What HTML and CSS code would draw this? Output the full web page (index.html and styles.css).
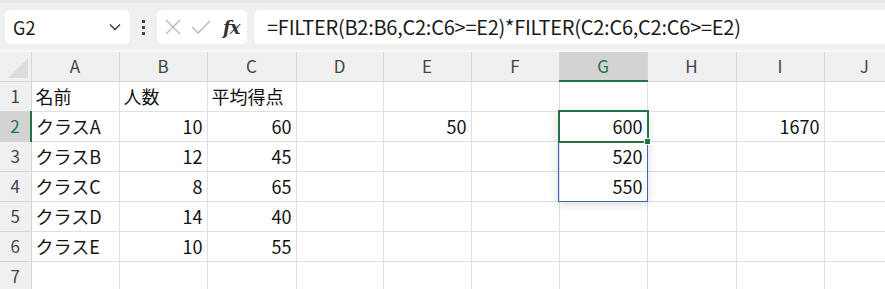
FILE: index.html
```html
<!DOCTYPE html>
<html lang="ja">
<head>
    <meta charset="UTF-8">
    <title>FILTER</title>
    <link rel="stylesheet" href="styles.css">
</head>
<body>
    <div class="toolbar">
        <div class="name_box">
            <span>G2</span>
            <svg width="12" height="8" viewBox="0 0 12 8"><path d="M1 1.5 L6 6.5 L11 1.5" fill="none" stroke="#333" stroke-width="1.3"/></svg>
        </div>
        <div class="dots"><i></i><i></i><i></i></div>
        <div class="fx_box">
            <svg width="16" height="16" viewBox="0 0 16 16"><path d="M1 1 L15 15 M15 1 L1 15" stroke="#b8b8b8" stroke-width="1.4"/></svg>
            <svg width="20" height="16" viewBox="0 0 20 16"><path d="M1 8 L7 14 L19 2" fill="none" stroke="#b8b8b8" stroke-width="1.4"/></svg>
            <span class="fx">fx</span>
        </div>
        <div class="formula">=FILTER(B2:B6,C2:C6&gt;=E2)*FILTER(C2:C6,C2:C6&gt;=E2)</div>
    </div>
    <div class="sheet">
        <table>
            <colgroup>
                <col style="width:31px"><col style="width:88px"><col style="width:88px"><col style="width:89px"><col style="width:87px"><col style="width:88px"><col style="width:88px"><col style="width:88px"><col style="width:89px"><col style="width:88px"><col>
            </colgroup>
            <tr class="heads">
                <th class="corner"><span class="tri"></span></th>
                <th>A</th><th>B</th><th>C</th><th>D</th><th>E</th><th>F</th><th class="sel">G</th><th>H</th><th>I</th><th>J</th>
            </tr>
            <tr><th>1</th><td>名前</td><td>人数</td><td>平均得点</td><td></td><td></td><td></td><td></td><td></td><td></td><td></td></tr>
            <tr><th class="sel">2</th><td>クラスA</td><td class="n">10</td><td class="n">60</td><td></td><td class="n">50</td><td></td><td class="n">600</td><td></td><td class="n">1670</td><td></td></tr>
            <tr><th>3</th><td>クラスB</td><td class="n">12</td><td class="n">45</td><td></td><td></td><td></td><td class="n">520</td><td></td><td></td><td></td></tr>
            <tr><th>4</th><td>クラスC</td><td class="n">8</td><td class="n">65</td><td></td><td></td><td></td><td class="n">550</td><td></td><td></td><td></td></tr>
            <tr><th>5</th><td>クラスD</td><td class="n">14</td><td class="n">40</td><td></td><td></td><td></td><td></td><td></td><td></td><td></td></tr>
            <tr><th>6</th><td>クラスE</td><td class="n">10</td><td class="n">55</td><td></td><td></td><td></td><td></td><td></td><td></td><td></td></tr>
            <tr><th>7</th><td></td><td></td><td></td><td></td><td></td><td></td><td></td><td></td><td></td><td></td></tr>
        </table>
        <div class="spill"></div>
        <div class="active"><span class="handle"></span></div>
    </div>
</body>
</html>
```

FILE: styles.css
```css
body { margin: 0; width: 885px; height: 289px; overflow: hidden; font-family: "Noto Sans CJK JP", "Noto Sans", sans-serif; color: #1f1f1f; background: #fff;}
.toolbar { height: 52px; box-sizing: border-box; border-top: 3px solid #e8e8e8; background: #f0f0f0; display: flex; align-items: center; padding: 0 0 0 5px; border-bottom: 2px solid #f7f7f7;}
.name_box { width: 125px; height: 34px; box-sizing: border-box; background: #fff; border-radius: 5px; display: flex; align-items: center; justify-content: space-between; padding: 0 9px 0 8px; font-size: 18px; color: #1a1a1a; margin-top: 1px;}
.dots { width: 27px; display: flex; flex-direction: column; align-items: center; gap: 3px; margin-top: 1px;}
.dots i { width: 3px; height: 3px; background: #444; display: block;}
.fx_box { width: 90px; height: 34px; box-sizing: border-box; background: #fff; border-radius: 5px; display: flex; align-items: center; padding: 0 0 0 8px; gap: 10px; margin-top: 1px;}
.fx { font-family: "DejaVu Serif", serif; font-style: italic; font-weight: bold; font-size: 18px; color: #333; letter-spacing: -1px; margin-left: 2px;}
.formula { flex: 1; height: 34px; box-sizing: border-box; background: #fff; border-radius: 5px 0 0 5px; margin-left: 7px; margin-top: 1px; padding-left: 13px; line-height: 34px; font-size: 20px; color: #1a1a1a; letter-spacing: -0.25px; white-space: nowrap;}
.sheet { position: relative;}
table { border-collapse: collapse; table-layout: fixed; width: 905px;}
tr { height: 30px;}
tr.heads { height: 29px;}
th, td { border: 1px solid #e0e0e0; padding: 0 4px; font-size: 18px; font-weight: normal; overflow: hidden; white-space: nowrap; line-height: 20px;}
td { color: #111;}
td.n { text-align: right;}
th { background: #f0f0f0; border-color: #d6d6d6; color: #444; text-align: center; border-left: none; font-size: 17px;}
tr.heads th { border-top: none;}
th.sel { background: #d3d3d3; color: #217346;}
tr.heads th.sel { border-bottom: 2px solid #217346;}
tr th.sel:first-child { border-right: 2px solid #217346;}
.corner { position: relative;}
.tri { position: absolute; right: 3px; bottom: 3px; width: 0; height: 0; border-left: 20px solid transparent; border-bottom: 20px solid #dcdcdc;}
.spill { position: absolute; left: 558px; top: 59px; width: 90px; height: 91px; box-sizing: border-box; border: 1px solid #3b65b5; box-shadow: 0 2px 10px rgba(0,0,0,0.15);}
.active { position: absolute; left: 558px; top: 58px; width: 91px; height: 33px; box-sizing: border-box; border: 2px solid #217346;}
.handle { position: absolute; right: -4px; bottom: -4px; width: 5px; height: 5px; background: #217346; border: 1px solid #fff;}
```
